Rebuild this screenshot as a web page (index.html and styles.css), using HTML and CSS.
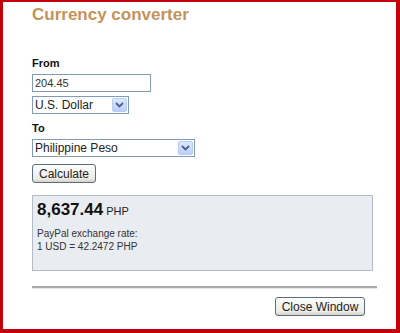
FILE: index.html
```html
<!DOCTYPE html>
<html lang="en">
<head>
    <meta charset="UTF-8">
    <title>Currency converter</title>
    <link rel="stylesheet" href="styles.css">
</head>
<body>
    <div class="frame">
        <h1 class="title">Currency converter</h1>

        <form class="converter">
            <label for="amount">From</label>
            <input type="text" id="amount" class="amount" value="204.45">
            <div class="select-wrap from-select">
                <select id="from">
                    <option>U.S. Dollar</option>
                </select>
                <span class="arrow"><svg width="9" height="6" viewBox="0 0 9 6"><path d="M1 1 L4.5 4.5 L8 1" fill="none" stroke="#4d6185" stroke-width="1.8"/></svg></span>
            </div>

            <label for="to">To</label>
            <div class="select-wrap to-select">
                <select id="to">
                    <option>Philippine Peso</option>
                </select>
                <span class="arrow"><svg width="9" height="6" viewBox="0 0 9 6"><path d="M1 1 L4.5 4.5 L8 1" fill="none" stroke="#4d6185" stroke-width="1.8"/></svg></span>
            </div>

            <button type="button" class="btn">Calculate</button>
        </form>

        <div class="result">
            <p class="total"><span class="sum">8,637.44</span> PHP</p>
            <p class="rate">PayPal exchange rate:<br>1 USD = 42.2472 PHP</p>
        </div>

        <hr class="rule">

        <div class="actions">
            <button type="button" class="btn">Close Window</button>
        </div>
    </div>
</body>
</html>
```

FILE: styles.css
```css
html, body {
    margin: 0;
    padding: 0;
    background-color: white;
}

body {
    font-family: "Liberation Sans", Arial, sans-serif;
    font-size: 11px;
    color: #222;
}

.frame {
    box-sizing: border-box;
    width: 400px;
    height: 333px;
    border-style: solid;
    border-color: #c4000b;
    border-width: 2px 4px 4px 3px;
    padding: 3px 18px 0 29px;
}

.title {
    margin: 0;
    font-size: 17px;
    line-height: 20px;
    font-weight: bold;
    color: #c4935a;
}

.converter {
    margin-top: 32px;
    display: flex;
    flex-direction: column;
    align-items: flex-start;
}

label {
    font-weight: bold;
    font-size: 11px;
    line-height: 13px;
    color: #111;
    margin-bottom: 4px;
}

.amount {
    box-sizing: border-box;
    width: 119px;
    height: 18px;
    margin: 0 0 4px;
    padding: 1px 2px;
    border: 1px solid #7f9db9;
    font-family: inherit;
    font-size: 11px;
    color: #333;
}

.select-wrap {
    position: relative;
    height: 18px;
}

.from-select {
    width: 97px;
    margin-bottom: 8px;
}

.to-select {
    width: 163px;
    margin-bottom: 7px;
}

.select-wrap select {
    box-sizing: border-box;
    width: 100%;
    height: 18px;
    margin: 0;
    padding: 0 2px;
    border: 1px solid #7f9db9;
    border-radius: 0;
    appearance: none;
    -webkit-appearance: none;
    background: white;
    font-family: inherit;
    font-size: 12px;
    color: #222;
}

.arrow {
    position: absolute;
    top: 2px;
    right: 2px;
    width: 15px;
    height: 14px;
    box-sizing: border-box;
    border: 1px solid #b8cbf4;
    border-radius: 2px;
    background: linear-gradient(#dce7fc, #bccff8);
    display: flex;
    align-items: center;
    justify-content: center;
}

.btn {
    box-sizing: border-box;
    height: 19px;
    padding: 0 6px;
    border: 1px solid #5b6e80;
    border-radius: 3px;
    background: linear-gradient(#fdfdfb, #ecebe6 80%, #d6d0c5);
    font-family: inherit;
    font-size: 12px;
    color: #222;
    white-space: nowrap;
    cursor: pointer;
}

.result {
    margin-top: 12px;
    width: 341px;
    height: 76px;
    box-sizing: border-box;
    border: 1px solid #b3bcc6;
    background-color: #e9ecf1;
    padding: 4px 4px;
}

.result p {
    margin: 0;
}

.total {
    font-size: 11px;
    color: #222;
}

.sum {
    font-size: 17px;
    font-weight: bold;
    color: #111;
}

.result .rate {
    margin-top: 7px;
    font-size: 10px;
    line-height: 13px;
    color: #333;
}

.rule {
    margin: 15px 0 0;
    width: 345px;
    height: 0;
    border: none;
    border-top: 2px solid #a9a9a9;
    border-bottom: 1px solid #e6e6e6;
}

.actions {
    width: 345px;
    display: flex;
    justify-content: flex-end;
    padding-top: 8px;
}

.actions .btn {
    margin-right: 12px;
    width: 90px;
    padding: 0 4px;
}
```
